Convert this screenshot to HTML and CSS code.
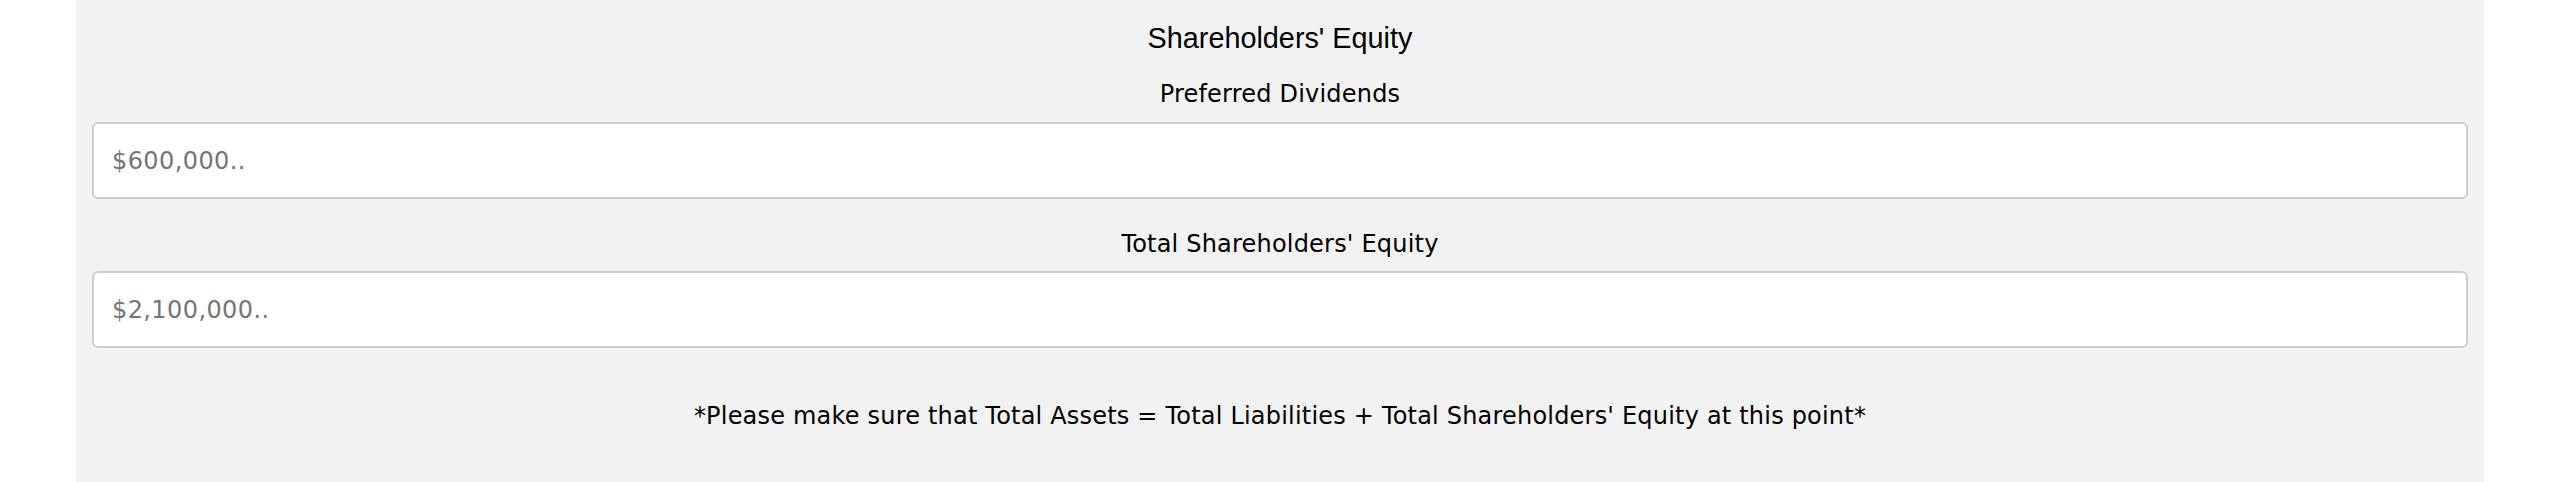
FILE: index.html
```html
<!DOCTYPE html>
<html lang="en">
<head>
<meta charset="utf-8">
<title>Shareholders' Equity</title>
<link rel="stylesheet" href="styles.css">
</head>
<body>
<main class="panel">
  <h2 class="title">Shareholders' Equity</h2>
  <label class="field-label" for="pref">Preferred Dividends</label>
  <input class="field-input" id="pref" type="text" placeholder="$600,000..">
  <label class="field-label second" for="equity">Total Shareholders' Equity</label>
  <input class="field-input" id="equity" type="text" placeholder="$2,100,000..">
  <p class="note">*Please make sure that Total Assets = Total Liabilities + Total Shareholders' Equity at this point*</p>
</main>
</body>
</html>
```
FILE: styles.css
```css
html, body {
  margin: 0;
  padding: 0;
  background: #ffffff;
}

.panel {
  box-sizing: border-box;
  min-height: 100vh;
  margin: 0 76px;
  padding: 22px 16px 0;
  background: #f2f2f2;
  display: flex;
  flex-direction: column;
  align-items: stretch;
  font-family: "DejaVu Sans", Verdana, sans-serif;
  color: #000;
}

.title {
  margin: 0;
  font-family: "Liberation Sans", Arial, sans-serif;
  font-weight: normal;
  font-size: 28.8px;
  line-height: 33px;
  text-align: center;
}

.field-label {
  display: block;
  margin: 25px 0 0;
  font-size: 24px;
  line-height: 28px;
  letter-spacing: 0.2px;
  text-align: center;
}

.field-label.second {
  margin-top: 31px;
}

.field-input {
  box-sizing: border-box;
  display: block;
  width: 100%;
  height: 77px;
  margin: 14px 0 0;
  padding: 0 18px;
  border: 2px solid #cccccc;
  border-radius: 6px;
  background: #ffffff;
  font-family: "DejaVu Sans", Verdana, sans-serif;
  font-size: 24px;
  letter-spacing: 0.4px;
  color: #333;
  outline: none;
}

.field-label.second + .field-input {
  margin-top: 13px;
}

.field-input::placeholder {
  color: #757575;
  opacity: 1;
}

.note {
  margin: 54px 0 0;
  font-size: 24px;
  line-height: 28px;
  letter-spacing: 0.2px;
  text-align: center;
}
```
